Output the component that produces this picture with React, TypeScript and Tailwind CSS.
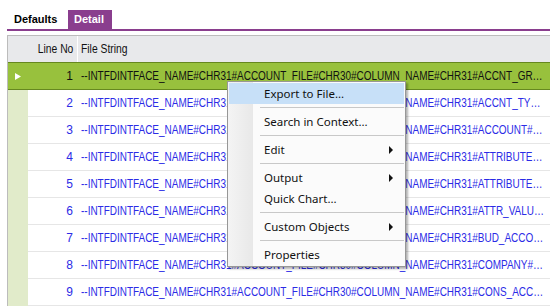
const rows = [
  'ACCNT_GROUP#CHR30#VALUE',
  'ACCNT_TYPE#CHR30#VALUE',
  'ACCOUNT#CHR30#VALUE',
  'ATTRIBUTE1#CHR30#VALUE',
  'ATTRIBUTE2#CHR30#VALUE',
  'ATTR_VALUE#CHR30#VALUE',
  'BUD_ACCOUNT#CHR30#VALUE',
  'COMPANY#CHR30#VALUE',
  'CONS_ACCOUNT#CHR30#VALUE',
];

type MenuEntry = { label: string; sub?: boolean; active?: boolean } | 'sep';

const menu: MenuEntry[] = [
  { label: 'Export to File...', active: true },
  'sep',
  { label: 'Search in Context...' },
  'sep',
  { label: 'Edit', sub: true },
  'sep',
  { label: 'Output', sub: true },
  { label: 'Quick Chart...' },
  'sep',
  { label: 'Custom Objects', sub: true },
  'sep',
  { label: 'Properties' },
];

function ContextMenu() {
  return (
    <div className="absolute left-[227px] top-[81px] w-[179px] bg-[#fbfbfb] border border-[#979797] py-[1px] shadow-[2px_2px_2px_rgba(0,0,0,0.3)] font-['Noto_Sans',sans-serif] text-[11.5px] text-[#111]">
      {/* gutter */}
      <div className="absolute left-0 top-0 bottom-0 w-[25px] bg-gradient-to-r from-[#f4f4f4] to-[#e8e8e8]" />
      {menu.map((m, i) =>
        m === 'sep' ? (
          <div key={i} className="relative h-[7px] flex items-center pl-[32px] pr-[1px]">
            <div className="h-[1px] w-full bg-[#c8c8c8]" />
          </div>
        ) : (
          <div
            key={i}
            className={`relative h-[21px] flex items-center pl-[35px] pr-[11px] mx-[1px] ${
              m.active ? 'bg-[#c7e0f8]' : ''
            }`}
          >
            <span className="flex-1 leading-none">{m.label}</span>
            {m.sub && (
              <svg width="4" height="8" viewBox="0 0 4 8">
                <path d="M0 0 L4 4 L0 8 Z" fill="#111" />
              </svg>
            )}
          </div>
        )
      )}
    </div>
  );
}

// grid text is a narrow arial, so squeeze it a bit
function FileText({ text }: { text: string }) {
  return (
    <div className="flex-1 min-w-0 pl-[3px] overflow-hidden">
      <div className="w-[559px] origin-left scale-x-[0.83] truncate">{text}</div>
    </div>
  );
}

export default function App() {
  return (
    <div className="relative w-[550px] h-[307px] overflow-hidden bg-white font-['Liberation_Sans',Arial,sans-serif] text-[12px]">
      {/* tabs */}
      <div className="flex pl-[7px] pt-[10px] text-[11px]">
        <div className="w-[61px] h-[19px] flex items-center pl-[7px] font-bold text-black">Defaults</div>
        <div className="w-[44px] h-[19px] flex items-center pl-[6px] font-bold text-white bg-[#8a3e8e]">Detail</div>
      </div>
      <div className="ml-[7px] h-[2px] bg-[#8a3e8e]" />
      <div className="h-[4px]" />

      {/* grid */}
      <div className="ml-[7px] border-l border-t border-[#bcbcbc]">
        <div className="flex h-[26px] bg-[#e8e9eb] items-center text-[#111]">
          <div className="w-[20px]" />
          <div className="w-[49px] pr-[4px] flex justify-end">
            <span className="origin-right scale-x-[0.86] whitespace-nowrap">Line No</span>
          </div>
          <div className="w-[1px] h-full bg-white" />
          <div className="pl-[3px]">
            <span className="block origin-left scale-x-[0.86] whitespace-nowrap">File String</span>
          </div>
        </div>
        {rows.map((r, i) => {
          const sel = i === 0;
          const text = `--INTFDINTFACE_NAME#CHR31#ACCOUNT_FILE#CHR30#COLUMN_NAME#CHR31#${r}`;
          if (sel) {
            return (
              <div key={i} className="flex items-center h-[28px] bg-[#98c13d] border-y border-[#66881f] text-[#111]">
                <div className="w-[20px] flex items-center justify-center">
                  <svg width="6" height="7" viewBox="0 0 6 7">
                    <path d="M0 0 L6 3.5 L0 7 Z" fill="#fff" />
                  </svg>
                </div>
                <div className="w-[49px] text-right pr-[4px]">{i + 1}</div>
                <div className="w-[1px]" />
                <FileText text={text} />
              </div>
            );
          }
          return (
            <div key={i} className="flex h-[27px] text-[#2b2be6]">
              <div className="w-[20px] bg-[#e1ebca]" />
              <div className="flex-1 min-w-0 flex items-center border-b border-[#e6e6e6]">
                <div className="w-[49px] text-right pr-[4px]">{i + 1}</div>
                <div className="w-[1px]" />
                <FileText text={text} />
              </div>
            </div>
          );
        })}
      </div>

      <ContextMenu />
    </div>
  );
}
